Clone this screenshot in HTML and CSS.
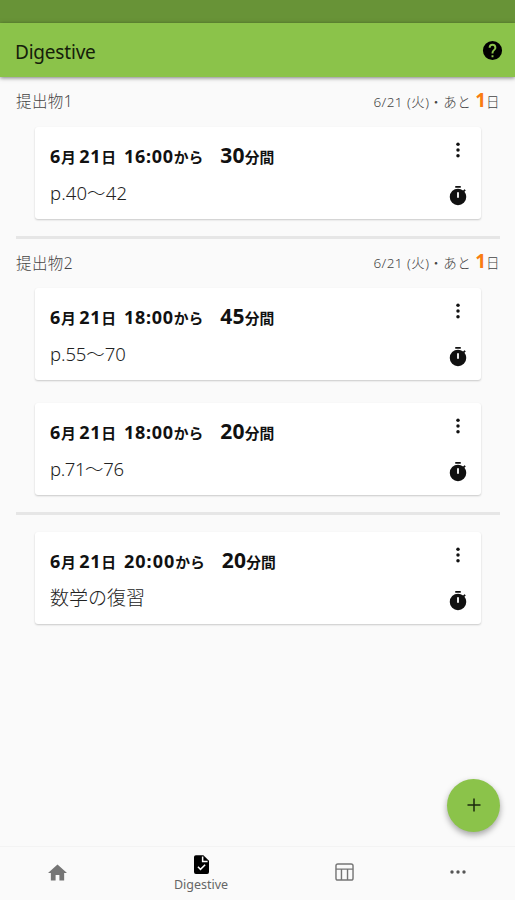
FILE: index.html
```
<!DOCTYPE html>
<html lang="ja">
<head>
    <meta charset="UTF-8">
    <meta name="viewport" content="width=device-width, initial-scale=1.0">
    <title>Digestive</title>
    <link rel="stylesheet" href="styles.css">
</head>
<body>
    <!-- アイコン -->
    <svg class="icons" width="0" height="0">
        <symbol id="more" viewBox="0 0 24 24">
            <circle cx="12" cy="5.8" r="1.9"/><circle cx="12" cy="12" r="1.9"/><circle cx="12" cy="18.2" r="1.9"/>
        </symbol>
        <symbol id="timer" viewBox="0 0 24 24">
            <path d="M9 1h6v2H9zM19.03 7.39l1.42-1.42c-.43-.51-.9-.99-1.41-1.41l-1.42 1.42A8.96 8.96 0 0 0 12 4a9 9 0 1 0 9 9c0-2.12-.74-4.07-1.97-5.61zM13 14h-2V8h2v6z"/>
        </symbol>
    </svg>

    <div class="app">
        <div class="status-bar"></div>
        <header class="app-bar">
            <h1>Digestive</h1>
            <svg class="help" viewBox="0 0 24 24"><path d="M12 2a10 10 0 1 0 0 20 10 10 0 0 0 0-20zm1 17h-2v-2h2v2zm2.07-7.75-.9.92C13.45 12.9 13 13.5 13 15h-2v-.5c0-1.1.45-2.1 1.17-2.83l1.24-1.26c.37-.36.59-.86.59-1.41a2 2 0 1 0-4 0H8a4 4 0 1 1 8 0c0 .88-.36 1.68-.93 2.25z"/></svg>
        </header>

        <main>
            <section>
                <div class="section-head">
                    <h2>提出物1</h2>
                    <p class="limit">6/21 (火)・あと <b>1</b>日</p>
                </div>
                <div class="card">
                    <div class="card-text">
                        <p class="time">6<small>月</small> 21<small>日</small><span class="start">16:00<small>から</small></span><span class="length">30</span><small>分間</small></p>
                        <p class="task">p.40～42</p>
                    </div>
                    <div class="actions">
                        <svg class="more"><use href="#more"/></svg>
                        <svg class="timer"><use href="#timer"/></svg>
                    </div>
                </div>
            </section>

            <section>
                <div class="section-head">
                    <h2>提出物2</h2>
                    <p class="limit">6/21 (火)・あと <b>1</b>日</p>
                </div>
                <div class="card">
                    <div class="card-text">
                        <p class="time">6<small>月</small> 21<small>日</small><span class="start">18:00<small>から</small></span><span class="length">45</span><small>分間</small></p>
                        <p class="task short">p.55～70</p>
                    </div>
                    <div class="actions">
                        <svg class="more"><use href="#more"/></svg>
                        <svg class="timer"><use href="#timer"/></svg>
                    </div>
                </div>
                <div class="card">
                    <div class="card-text">
                        <p class="time">6<small>月</small> 21<small>日</small><span class="start">18:00<small>から</small></span><span class="length">20</span><small>分間</small></p>
                        <p class="task shorter">p.71～76</p>
                    </div>
                    <div class="actions">
                        <svg class="more"><use href="#more"/></svg>
                        <svg class="timer"><use href="#timer"/></svg>
                    </div>
                </div>
            </section>

            <section class="no-head">
                <div class="card">
                    <div class="card-text">
                        <p class="time">6<small>月</small> 21<small>日</small><span class="start late">20:00<small>から</small></span><span class="length">20</span><small>分間</small></p>
                        <p class="task kanji">数学の復習</p>
                    </div>
                    <div class="actions">
                        <svg class="more"><use href="#more"/></svg>
                        <svg class="timer"><use href="#timer"/></svg>
                    </div>
                </div>
            </section>
        </main>

        <button class="fab" aria-label="追加">
            <svg viewBox="0 0 14 14"><path d="M7 .5v13M.5 7h13"/></svg>
        </button>

        <!-- 下のメニュー -->
        <nav>
            <div class="tab">
                <svg class="home" viewBox="0 0 20 17"><path d="M8 17v-6h4v6h5V9h3L10 0 0 9h3v8z"/></svg>
            </div>
            <div class="tab selected">
                <svg class="file" viewBox="0 0 16 20"><path class="paper" d="M2 0h8l6 6v12a2 2 0 0 1-2 2H2a2 2 0 0 1-2-2V2a2 2 0 0 1 2-2z"/><path class="mark" d="M9.2 1.5v5.3h5.3M4.2 12.5l2.7 2.7 5-5"/></svg>
                <span>Digestive</span>
            </div>
            <div class="tab">
                <svg class="table" viewBox="0 0 20 19"><rect x="1" y="1" width="18" height="17" rx="2"/><path d="M1 6.5h18M6.8 6.5V18M13.2 6.5V18"/></svg>
            </div>
            <div class="tab">
                <svg class="dots" viewBox="0 0 16 4"><circle cx="2" cy="2" r="1.7"/><circle cx="8" cy="2" r="1.7"/><circle cx="14" cy="2" r="1.7"/></svg>
            </div>
        </nav>
    </div>
</body>
</html>
```
FILE: styles.css
```
* {
    box-sizing: border-box;
}
body {
    margin: 0;
    font-family: "Noto Sans", "Noto Sans CJK JP", sans-serif;
    background-color: #fafafa;
    color: #222;
}
h1, h2, p {
    margin: 0;
    font-weight: normal;
}
.icons {
    position: absolute;
}
.app {
    position: relative;
    display: flex;
    flex-direction: column;
    height: 900px;
    overflow: hidden;
}
.status-bar {
    height: 23px;
    background-color: #689337;
}
.app-bar {
    display: flex;
    justify-content: space-between;
    align-items: center;
    height: 54px;
    padding: 0 11px 0 15px;
    background-color: #8bc34a;
    box-shadow: 0 1px 4px rgba(0, 0, 0, 0.5);
}
.app-bar h1 {
    padding-top: 3px;
    font-size: 19px;
    line-height: 26px;
    letter-spacing: -0.2px;
    color: #15200a;
}
.help {
    width: 23px;
    height: 23px;
    fill: #000;
}

/* 課題リスト */
main {
    flex: 1;
    padding: 0 15px 0 16px;
}
section + section {
    border-top: 3px solid #e6e6e6;
}
section {
    padding-bottom: 18px;
}
.section-head {
    display: flex;
    justify-content: space-between;
    align-items: center;
    height: 49px;
    padding-bottom: 3px;
    color: #444;
}
section:first-child .section-head {
    height: 50px;
}
.section-head h2 {
    font-size: 15.5px;
    font-weight: 300;
    letter-spacing: 0.4px;
}
.limit {
    font-size: 13.5px;
    font-weight: 300;
    line-height: 24px;
    letter-spacing: 0.45px;
    white-space: nowrap;
}
.limit b {
    font-size: 19px;
    font-weight: bold;
    letter-spacing: 0;
    color: #f97d10;
}
.card {
    display: flex;
    justify-content: space-between;
    height: 92px;
    margin: 0 19px -1px;
    padding: 0 14px 0 15px;
    background-color: #fff;
    border-radius: 3px;
    box-shadow: 0 1px 2px rgba(0, 0, 0, 0.2);
}
.card + .card {
    margin-top: 24px;
}
.no-head {
    padding-top: 17px;
}
.time {
    margin-top: 14px;
    font-size: 18px;
    font-weight: bold;
    line-height: 28px;
    letter-spacing: 0.7px;
    word-spacing: -2px;
    white-space: nowrap;
    color: #111;
}
.time small {
    font-size: 14.8px;
    letter-spacing: 0;
}
.start {
    margin-left: 8px;
}
.late {
    letter-spacing: 1px;
}
.length {
    margin-left: 17px;
    font-size: 21px;
    letter-spacing: 0.2px;
}
.task {
    margin-top: 8px;
    font-size: 18.5px;
    font-weight: 300;
    line-height: 28px;
    letter-spacing: 0.1px;
}
.short {
    letter-spacing: -0.1px;
}
.shorter {
    letter-spacing: -0.4px;
}
.kanji {
    font-size: 19px;
    letter-spacing: 0;
}
.actions {
    display: flex;
    flex-direction: column;
    align-items: center;
    width: 18px;
}
.actions svg {
    width: 22px;
    height: 22px;
    fill: #111;
}
.actions .more {
    margin-top: 12px;
}
.actions .timer {
    margin-top: 24px;
}

.fab {
    position: absolute;
    right: 15px;
    bottom: 68px;
    display: flex;
    justify-content: center;
    align-items: center;
    width: 53px;
    height: 53px;
    padding: 0;
    border: none;
    border-radius: 50%;
    background-color: #8bc34a;
    box-shadow: 0 3px 6px rgba(0, 0, 0, 0.35);
}
.fab svg {
    width: 14px;
    height: 14px;
    margin-bottom: 2px;
    fill: none;
    stroke: #1b290d;
    stroke-width: 1.5;
}

nav {
    display: grid;
    grid-template-columns: 115px 172px 114px 114px;
    height: 54px;
    padding-bottom: 3px;
    border-top: 1px solid #f3f3f3;
}
.tab {
    display: flex;
    flex-direction: column;
    justify-content: center;
    align-items: center;
    fill: #757575;
}
.home {
    width: 19px;
    height: 17px;
}
.file {
    width: 15px;
    height: 19px;
}
.paper {
    fill: #000;
}
.mark {
    fill: none;
    stroke: #fff;
    stroke-width: 1.6;
}
.selected {
    padding-top: 4px;
}
.selected span {
    margin-top: 2px;
    font-size: 12.5px;
    line-height: 17px;
    color: #666;
}
.table {
    width: 19px;
    height: 18px;
    fill: none;
    stroke: #757575;
    stroke-width: 1.5;
}
.dots {
    width: 16px;
    height: 4px;
    fill: #555;
}
```
